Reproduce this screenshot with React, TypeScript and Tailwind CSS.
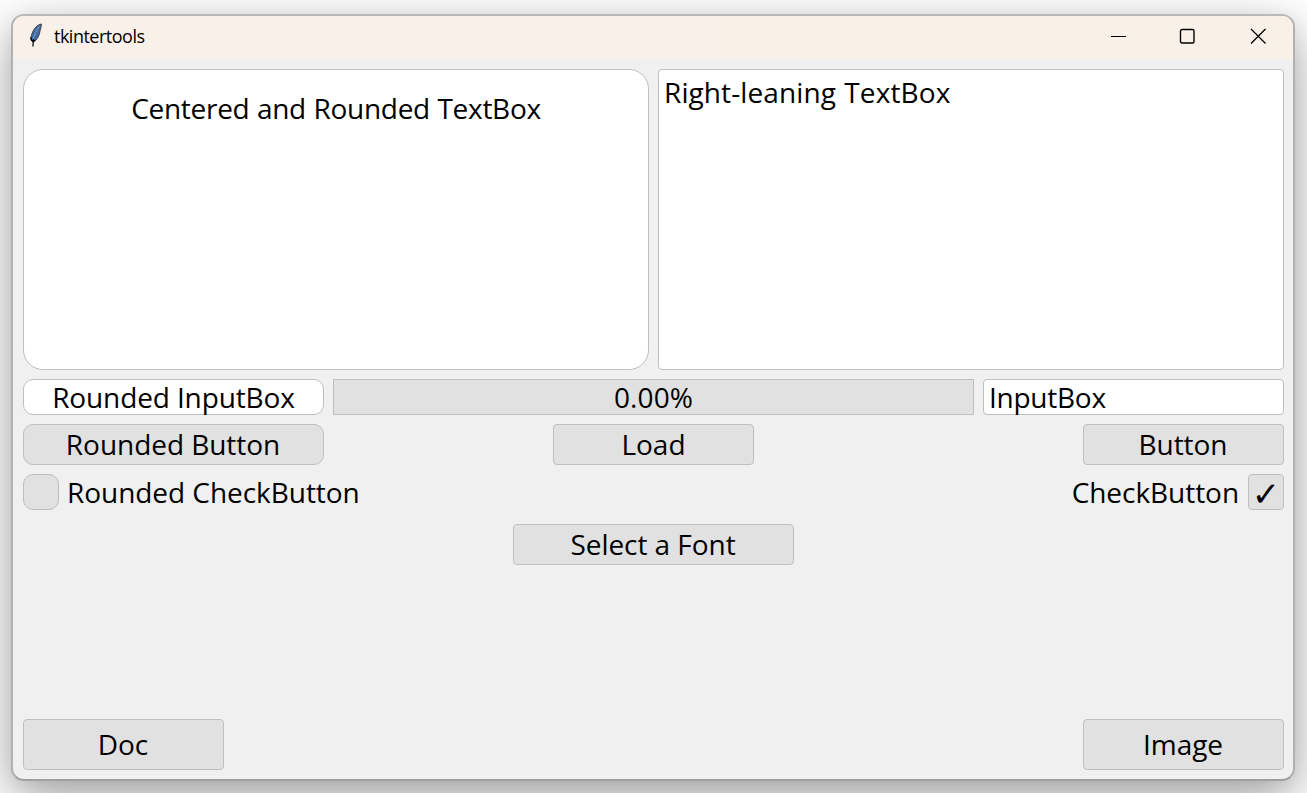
import type { ReactNode } from "react";

const face = "border border-[#bfbfbf] flex items-center whitespace-nowrap";

function Button({ className, children }: { className: string; children: ReactNode }) {
  return (
    <button className={`${face} justify-center bg-[#e1e1e1] ${className}`}>{children}</button>
  );
}

function Feather() {
  return (
    <svg width="14" height="25" viewBox="0 0 14 25">
      <path d="M12.300 1C9 1.500 5 5 3 10.500C2 13 1.800 15.500 2.200 17L4 19L6.500 17.500C9.300 15 10.300 12 10.800 9C11.100 6.500 12.600 3.500 12.300 1Z" fill="#3f6ca8" stroke="#3a3a3a" strokeWidth="0.900" />
      <path d="M10.300 3.500C7 8 5 13 3.900 18" fill="none" stroke="#7f9cc2" strokeWidth="0.900" />
      <path d="M1.900 14L2.200 17L4 18.500L6.500 17" fill="none" stroke="#000" strokeWidth="1.200" />
      <path d="M4.500 16L3.900 23.500" stroke="#000" strokeWidth="1.200" />
    </svg>
  );
}

export default function App() {
  return (
    <div className="h-[793px] w-[1307px] overflow-hidden bg-white pl-[11px] pt-[14px] font-['Open_Sans','Noto_Sans',sans-serif] text-black">
      <div className="flex h-[767px] w-[1284px] flex-col overflow-hidden rounded-[13px] border-2 border-t-[#b9b9b7] border-x-[#b1b1b1] border-b-[#a0a0a0] bg-[#f0f0f0] shadow-[0_16px_50px_rgba(0,0,0,0.38),0_2px_16px_rgba(0,0,0,0.04)]">
        <header className="flex h-[43px] shrink-0 items-center bg-gradient-to-r from-[#f9f0ea] to-[#f9f1e7] pb-[4px] pl-[16px]">
          <Feather />
          <span className="ml-[11px] text-[18px] leading-none tracking-[-0.5px]">tkintertools</span>
          <div className="ml-auto flex items-center pr-[27px]">
            <svg width="16" height="16" viewBox="0 0 16 16" className="mr-[53px]"><path d="M1 8.500H16" stroke="#000" /></svg>
            <svg width="16" height="16" viewBox="0 0 16 16" className="mr-[55px]"><rect x="1.500" y="1.500" width="13.500" height="13.500" rx="1.500" fill="none" stroke="#000" strokeWidth="1.400" /></svg>
            <svg width="16" height="16" viewBox="0 0 16 16"><path d="M1 1L15.500 15.500M15.500 1L1 15.500" stroke="#000" strokeWidth="1.300" /></svg>
          </div>
        </header>
        <main className="flex flex-1 flex-col pb-[9px] pl-[10px] pr-[9px] pt-[10px] text-[28px] leading-[36px] tracking-[-0.05px]">
          <div className="flex gap-[9px]">
            <div className={`${face} h-[301px] w-[626px] items-start! justify-center rounded-[20px] bg-white pt-[20px]`}><span className="tracking-[-0.28px] [word-spacing:0.5px]">Centered and Rounded TextBox</span></div>
            <div className={`${face} h-[301px] w-[626px] items-start! rounded-[4px] bg-white pl-[5px] pt-[4px]`}><span className="tracking-[0.1px] [word-spacing:1px]">Right-leaning TextBox</span></div>
          </div>
          <div className="mt-[9px] flex gap-[9px]">
            <div className={`${face} h-[36px] w-[301px] justify-center rounded-[10px] bg-white`}><span className="tracking-[-0.12px]">Rounded InputBox</span></div>
            <div className={`${face} h-[36px] w-[641px] justify-center bg-[#e1e1e1]`}><span className="tracking-[0.1px]">0.00%</span></div>
            <div className={`${face} h-[36px] w-[301px] rounded-[4px] bg-white pl-[5px]`}><span className="tracking-[-0.25px]">InputBox</span></div>
          </div>
          <div className="mt-[9px] flex">
            <Button className="h-[41px] w-[301px] rounded-[10px] pb-[2px] pr-[1px]"><span>Rounded Button</span></Button>
            <Button className="ml-[229px] h-[41px] w-[201px] rounded-[4px] pb-[2px]"><span>Load</span></Button>
            <Button className="ml-auto h-[41px] w-[201px] rounded-[4px] pb-[2px] pr-[1px]"><span>Button</span></Button>
          </div>
          <div className="mt-[9px] flex h-[36px] items-center whitespace-nowrap">
            <Button className="size-[36px] rounded-[10px]">{null}</Button>
            <span className="ml-[8px]">Rounded CheckButton</span>
            <span className="ml-auto mr-[9px]">CheckButton</span>
            <Button className="size-[36px] rounded-[4px] pt-[3px]"><span className="font-['DejaVu_Sans',sans-serif] text-[34px]">✓</span></Button>
          </div>
          <div className="mt-[14px] flex pl-[490px]">
            <Button className="h-[41px] w-[281px] rounded-[4px] pb-[2px] pr-[1px]"><span>Select a Font</span></Button>
          </div>
          <div className="mt-auto flex justify-between">
            <Button className="h-[51px] w-[201px] rounded-[4px] pb-[2px] pr-[1px]"><span>Doc</span></Button>
            <Button className="h-[51px] w-[201px] rounded-[4px] pb-[2px] pr-[1px]"><span>Image</span></Button>
          </div>
        </main>
      </div>
    </div>
  );
}
